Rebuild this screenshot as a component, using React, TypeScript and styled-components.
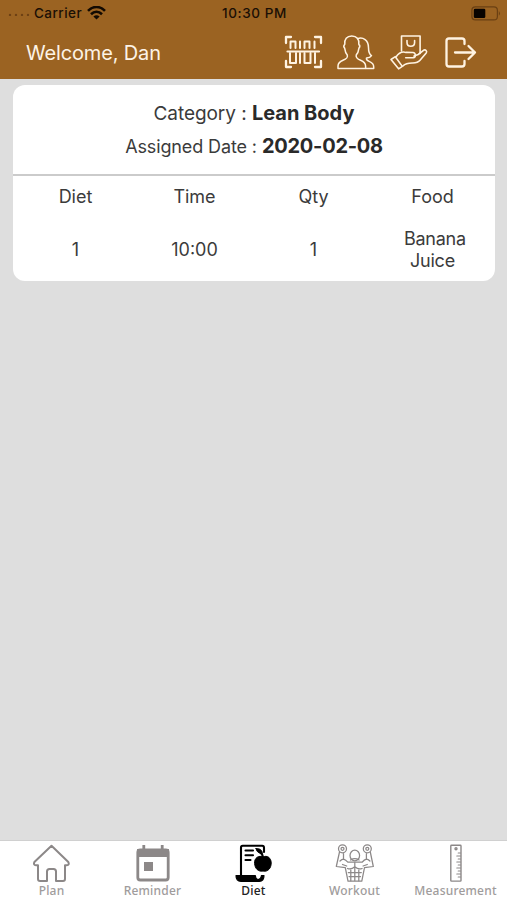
import React from "react";
import styled, { createGlobalStyle } from "styled-components";

const GlobalStyle = createGlobalStyle`
  * { box-sizing: border-box; }
  body { margin: 0; font-family: Inter, "Liberation Sans", sans-serif; background: #dedede; }
`;

const Screen = styled.div`
  display: flex;
  flex-direction: column;
  width: 507px;
  height: 900px;
  background: #dedede;
  overflow: hidden;
`;

const TopArea = styled.header`
  flex: none;
  height: 79px;
  background: #9b6322;
`;

const StatusBar = styled.div`
  display: grid;
  grid-template-columns: 1fr auto 1fr;
  align-items: center;
  height: 26px;
  padding: 0 6px 0 8px;
  color: #1a0f05;
  font-size: 13.5px;
  font-weight: 500;
  line-height: 26px;
`;

const Carrier = styled.div`
  display: flex;
  align-items: center;
`;

const CarrierName = styled.span`
  margin: 0 5px 0 4px;
  letter-spacing: 0.45px;
`;

const Clock = styled.span`
  letter-spacing: 0.6px;
`;

const Battery = styled.div`
  display: flex;
  justify-content: flex-end;
`;

const TitleBar = styled.div`
  display: flex;
  align-items: flex-start;
  justify-content: space-between;
  height: 53px;
  padding: 0 24px 0 26px;
`;

const Welcome = styled.h1`
  margin: 0;
  color: #fdf3e6;
  font-size: 20px;
  font-weight: 400;
  line-height: 55px;
  letter-spacing: -0.15px;
`;

const Actions = styled.nav`
  display: flex;
  gap: 11px;
  padding-top: 5px;
`;

const ActionButton = styled.button`
  display: block;
  width: 42px;
  height: 42px;
  padding: 0;
  border: 0;
  background: none;
`;

const LineIcon = styled.svg<{ $weight: number }>`
  display: block;
  fill: none;
  stroke: currentColor;
  stroke-width: ${(p) => p.$weight};
  stroke-linecap: round;
  stroke-linejoin: round;
`;

const HeaderIcon = styled(LineIcon)`
  color: #fff3e2;
`;

const Content = styled.main`
  flex: 1;
  padding: 6px 12px 0 13px;
`;

const Card = styled.section`
  height: 195.5px;
  border-radius: 12px;
  background: #fff;
  color: #3b3b3b;
`;

const Summary = styled.div`
  height: 91px;
  padding-top: 12px;
  border-bottom: 2px solid #cbcbcb;
  text-align: center;
`;

const SummaryLine = styled.div<{ $size: number; $spacing: number }>`
  height: 33px;
  line-height: 33px;
  font-size: ${(p) => p.$size}px;
  letter-spacing: ${(p) => p.$spacing}px;
`;

const Value = styled.strong<{ $spacing: number }>`
  color: #2a2a2a;
  font-size: 20px;
  font-weight: 650;
  letter-spacing: ${(p) => p.$spacing}px;
`;

const Row = styled.div<{ $height: number }>`
  display: grid;
  grid-template-columns: repeat(4, 119px);
  justify-content: center;
  align-items: center;
  height: ${(p) => p.$height}px;
  text-align: center;
  font-size: 18px;
  line-height: 22px;
`;

const Cell = styled.div<{ $spacing?: number }>`
  white-space: pre;
  letter-spacing: ${(p) => p.$spacing ?? 0}px;
`;

const TabBar = styled.nav`
  display: grid;
  grid-template-columns: repeat(5, 101px);
  justify-content: center;
  flex: none;
  height: 60px;
  border-top: 1px solid #d0d0d0;
  background: #fff;
`;

const Tab = styled.a<{ $active?: boolean }>`
  display: flex;
  flex-direction: column;
  align-items: center;
  padding-top: 2px;
  color: ${(p) => (p.$active ? "#000" : "#8c8888")};
`;

const TabLabel = styled.span<{ $active?: boolean }>`
  color: ${(p) => (p.$active ? "#222" : "#a09c9c")};
  font-family: "Noto Sans", "Open Sans", sans-serif;
  font-size: 12px;
  font-weight: 500;
  line-height: 14px;
  letter-spacing: 0.2px;
  white-space: nowrap;
`;

const SignalDots = () => (
  <svg width="22" height="6" viewBox="0 0 22 6" fill="#6d4115">
    {[2, 8, 14, 20].map((x) => (
      <circle key={x} cx={x} cy="5" r="1.2" />
    ))}
  </svg>
);

const Wifi = () => (
  <svg width="19" height="14" viewBox="0 0 19 14" fill="none" stroke="#120a02" strokeWidth="2.6">
    <path d="M1 4.8C6-.3 13-.3 18 4.8M4 8.2c3.3-3.2 7.700-3.200 11 0" />
    <path d="M9.500 13.600L6.400 10.500q3.100-2.500 6.200 0z" fill="#120a02" stroke="none" />
  </svg>
);

const BatteryIcon = () => (
  <svg width="30" height="15" viewBox="0 0 30 15" fill="none">
    <rect x=".9" y=".9" width="25.500" height="13" rx="3.500" stroke="#6b4013" strokeWidth="1.200" />
    <rect x="2.800" y="2.800" width="11.500" height="9.200" rx="1.300" fill="#080300" />
    <path d="M27.800 5q2.300 2.400 0 4.800z" fill="#6b4013" />
  </svg>
);

const Barcode = () => (
  <HeaderIcon $weight={2} width="42" height="42" viewBox="282 31 42 42">
    <path d="M286 43v-6h5M315 37h6v6M286 61v6h5M315 67h6v-6" strokeWidth="2.300" />
    <path d="M287.500 51.500h31.500" strokeWidth="2.200" />
    <path d="M290.500 48v-6.500h5V48M300 41.500V48M304.500 48v-6.500h5V48M314.500 41.500V48" />
    <path d="M290 53v10h6V53M300 53v10M304.500 53v10h6V53M315 53v10" />
  </HeaderIcon>
);

const People = () => (
  <HeaderIcon $weight={1.5} width="42" height="42" viewBox="335 31 42 42">
    <path d="M338 68.500V66c0-3 2-4.500 5-5.700 3.500-1.300 5-2.300 4.300-5.300-1.800-2-2.300-4.300-2.600-6.700-1.300-1.500-1-3 .1-4-.6-5 2-8.300 7-8.300s7.600 3.300 7 8.300c1.200 1 1.300 2.500.1 4-.3 2.400-.9 4.700-2.700 6.700-.6 3 1 4 4.400 5.300 3 1.200 5 2.700 5 5.700v2.500z" />
    <path d="M357.500 38.700c5.500-2 11 1.500 11 9 0 5 .8 6.600 3 8-1 1.600-2.800 2.200-5 2.300-.5 1.700.4 2.500 2.700 3.400 3 1.200 4.500 2.600 4.500 5.600v1.500H366" />
  </HeaderIcon>
);

const HandBag = () => (
  <HeaderIcon $weight={1.6} width="42" height="42" viewBox="388 31 42 42">
    <path d="M401.500 51V36h18.600v17.500" />
    <path d="M407 40.500v2c0 5 7.600 5 7.600 0v-2" />
    <path d="M391 59.500l4.300-2.800 7 9.700-3.700 2.400z" />
    <path d="M396 57c3-4.500 6-5.800 10-4.600l7 .1c2.800.2 3.300 4.700.2 5.200h-7.500" />
    <path d="M414 56l4.200-1.500 5.300-4.200c2-1.200 4 .8 2.700 2.600l-6.400 7.700c-1.600 2-4 2.300-7 2.400-4.500.1-6.800 0-9.800 2.800" />
  </HeaderIcon>
);

const Exit = () => (
  <HeaderIcon $weight={2.3} width="42" height="42" viewBox="441 31 42 42">
    <path d="M464.500 44v-3q0-2.500-2.500-2.500h-13q-2.500 0-2.500 2.500v23q0 2.500 2.500 2.500h13q2.500 0 2.500-2.500v-3" />
    <path d="M455 52.500h20M468.500 46l6.500 6.500-6.500 6.500" />
  </HeaderIcon>
);

const Home = () => (
  <LineIcon $weight={2} width="41" height="41" viewBox="31 843 41 41">
    <path d="M51.500 845.700l16.800 16.300q1.500 3-1.600 3.300h-1.700V879q0 2-2 2H56v-9.500q0-2.500-2.500-2.500h-4q-2.500 0-2.500 2.500v9.500h-7q-2 0-2-2v-13.700h-2q-3-.3-1.600-3.300z" />
  </LineIcon>
);

const Calendar = () => (
  <LineIcon $weight={2.8} width="41" height="41" viewBox="132 843 41 41">
    <rect x="137.800" y="850" width="30.400" height="30" rx="2.500" />
    <path d="M137 849h32v8h-32z" fill="currentColor" stroke="none" />
    <path d="M143.800 845v4M162.200 845v4" strokeLinecap="butt" />
    <path d="M144 862h9v9h-9z" fill="currentColor" stroke="none" />
  </LineIcon>
);

const DietPlan = () => (
  <LineIcon $weight={2.1} width="41" height="41" viewBox="233 843 41 41">
    <path d="M241 876v-28.500q0-1.700 1.700-1.700h19.500q1.800 0 1.800 2v1M245.500 850.500h7.500M245.500 855.200h7.500M245.500 860h5" />
    <path d="M236 875.500h19.300q.2 3.600 2.600 4c3 .2 3-1.500 3.600-4h2.500c0 4.300-1.700 5.800-4.700 5.800H241c-3 0-5-2-5-5.800z" fill="currentColor" strokeWidth="1.200" />
    <path d="M263 857c-4-2.300-9 1-8.400 6.500.3 5 3.700 8.500 8.400 7.500 5 1.200 8.200-3 8.200-8 0-5-4-8.300-8.200-6z" fill="currentColor" strokeWidth="1" />
    <path d="M262.800 858c.2-3-.8-4.500-3-5.800" />
    <path d="M256 848.500c4-.2 6.200 1.600 6.500 5-3.600 0-6.200-1.700-6.500-5z" fill="currentColor" strokeWidth=".8" />
    <path d="M264 849v3" />
  </LineIcon>
);

const Bodybuilder = () => (
  <LineIcon $weight={1.25} width="41" height="41" viewBox="334 843 41 41">
    <circle cx="342.500" cy="848.800" r="4" />
    <circle cx="342.500" cy="848.800" r="1.500" />
    <circle cx="367.300" cy="848.800" r="4" />
    <circle cx="367.300" cy="848.800" r="1.500" />
    <ellipse cx="354.800" cy="855.500" rx="4.800" ry="5.300" />
    <path d="M350.500 860q4.300-2.700 8.600 0" />
    <path d="M339.500 852l-3.200 14.500 9 1.200 2.700 13.500h13.800l2.700-13.500 8.800-1.200-3-14.500M343.500 853.500v5.700c1.700.5 3 1.500 4.300 3h14.300c1.400-1.500 2.600-2.500 4.300-3v-5.700M340 861q1.800-1.700 3.500-1.800M366.400 859.200q1.800.1 3.500 1.800" />
    <path d="M342.500 864.500l4.200 1.500M367.300 864.500l-4.200 1.500M347.500 868.500q3.700 1.500 7.300-1.700 3.600 3.200 7.300 1.700M354.800 862.500v18M348.300 872.500h13M349 876.500h11.500M350.800 870v10.800M358.800 870v10.800" />
  </LineIcon>
);

const Ruler = () => (
  <LineIcon $weight={1.4} width="41" height="41" viewBox="435 843 41 41">
    <rect x="450.800" y="845.300" width="10.200" height="35.800" rx=".7" />
    <circle cx="456" cy="848.800" r="1" />
    <path d="M458.200 853h2.300M456.800 856h3.700M458.200 859h2.300M456.800 862h3.700M458.200 865h2.300M456.800 868h3.700M458.200 871h2.300M456.800 874h3.700M458.200 877h2.300" strokeWidth="1.100" />
  </LineIcon>
);

const actions = [
  { name: "Scan", Icon: Barcode },
  { name: "Members", Icon: People },
  { name: "Orders", Icon: HandBag },
  { name: "Sign out", Icon: Exit },
];

const tabs = [
  { label: "Plan", Icon: Home },
  { label: "Reminder", Icon: Calendar },
  { label: "Diet", Icon: DietPlan, active: true },
  { label: "Workout", Icon: Bodybuilder },
  { label: "Measurement", Icon: Ruler },
];

const headings = ["Diet", "Time", "Qty", "Food"];
const meal = { diet: "1", time: "10:00", qty: "1", food: " Banana\nJuice" };

export default function App() {
  return (
    <>
      <GlobalStyle />
      <Screen>
        <TopArea>
          <StatusBar>
            <Carrier>
              <SignalDots />
              <CarrierName>Carrier</CarrierName>
              <Wifi />
            </Carrier>
            <Clock>10:30 PM</Clock>
            <Battery>
              <BatteryIcon />
            </Battery>
          </StatusBar>
          <TitleBar>
            <Welcome>Welcome, Dan</Welcome>
            <Actions>
              {actions.map(({ name, Icon }) => (
                <ActionButton key={name} aria-label={name}>
                  <Icon />
                </ActionButton>
              ))}
            </Actions>
          </TitleBar>
        </TopArea>
        <Content>
          <Card>
            <Summary>
              <SummaryLine $size={19} $spacing={-0.06}>
                Category : <Value $spacing={0}>Lean Body</Value>
              </SummaryLine>
              <SummaryLine $size={18} $spacing={-0.12}>
                Assigned Date : <Value $spacing={-0.25}>2020-02-08</Value>
              </SummaryLine>
            </Summary>
            <Row $height={42}>
              {headings.map((heading) => (
                <Cell key={heading}>{heading}</Cell>
              ))}
            </Row>
            <Row $height={63}>
              <Cell>{meal.diet}</Cell>
              <Cell>{meal.time}</Cell>
              <Cell>{meal.qty}</Cell>
              <Cell $spacing={-0.25}>{meal.food}</Cell>
            </Row>
          </Card>
        </Content>
        <TabBar>
          {tabs.map(({ label, Icon, active }) => (
            <Tab key={label} $active={active}>
              <Icon />
              <TabLabel $active={active}>{label}</TabLabel>
            </Tab>
          ))}
        </TabBar>
      </Screen>
    </>
  );
}
